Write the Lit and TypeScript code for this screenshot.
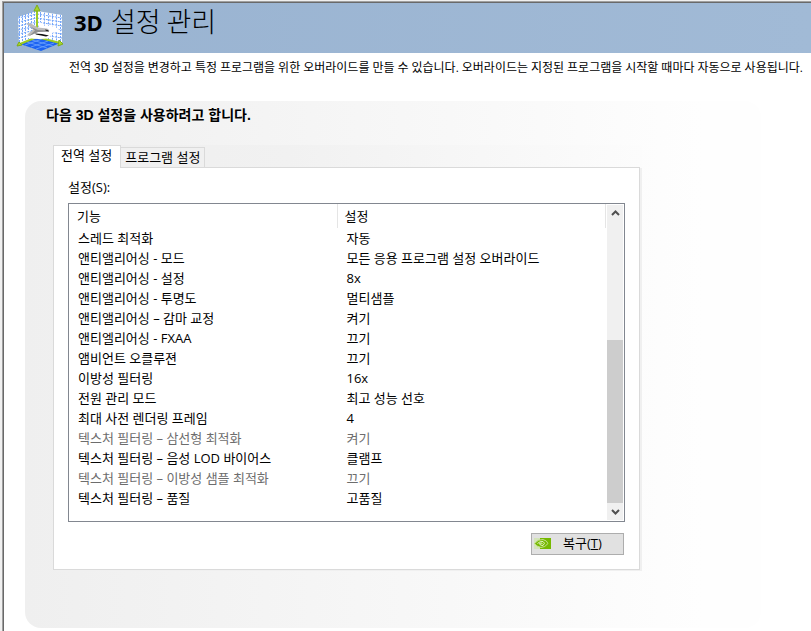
import { LitElement, html, css, svg } from "lit";
import { customElement, state } from "lit/decorators.js";
import { classMap } from "lit/directives/class-map.js";

interface Setting {
  name: string;
  value: string;
  disabled?: boolean;
}

const SETTINGS: Setting[] = [
  { name: "스레드 최적화", value: "자동" },
  { name: "앤티앨리어싱 - 모드", value: "모든 응용 프로그램 설정 오버라이드" },
  { name: "앤티앨리어싱 - 설정", value: "8x" },
  { name: "앤티앨리어싱 - 투명도", value: "멀티샘플" },
  { name: "앤티앨리어싱 – 감마 교정", value: "켜기" },
  { name: "앤티엘리어싱 - FXAA", value: "끄기" },
  { name: "앰비언트 오클루젼", value: "끄기" },
  { name: "이방성 필터링", value: "16x" },
  { name: "전원 관리 모드", value: "최고 성능 선호" },
  { name: "최대 사전 렌더링 프레임", value: "4" },
  { name: "텍스처 필터링 – 삼선형 최적화", value: "켜기", disabled: true },
  { name: "텍스처 필터링 – 음성 LOD 바이어스", value: "클램프" },
  { name: "텍스처 필터링 – 이방성 샘플 최적화", value: "끄기", disabled: true },
  { name: "텍스처 필터링 – 품질", value: "고품질" },
];

// Wall grid lines of the header emblem.
const steps = [0, 1, 2, 3, 4, 5];
const leftGrid = steps.map(
  (i) => svg`<path d="M${3.5 + i * 3} ${11 - i}V${38 - i}M2 ${13 + i * 4}L21 ${9 + i * 4}" />`
);
const rightGrid = steps.map(
  (i) => svg`<path d="M${24.5 + i * 4} ${7 + i * 0.6}V${32 + i}M21 ${9 + i * 4}L46 ${13 + i * 4}" />`
);

const emblem = html`
  <svg class="emblem" viewBox="0 0 48 48" aria-hidden="true">
    <path d="M2 12L21 6V32L3 39Z" fill="#fff" />
    <path d="M21 6L46 10V38L21 32Z" fill="#fff" />
    <g fill="none" stroke="#74a6fa" stroke-width="1" stroke-dasharray="2 1">
      ${leftGrid}${rightGrid}
    </g>
    <path d="M4 39L21 32L44 38L25 46Z" fill="#1c62f2" />
    <path d="M9 40L26 34M15 42L32 36M20 44L38 38M11 37L31 43M16 35L37 41" stroke="#6fa4fb" stroke-width="0.8" fill="none" />
    <path d="M21 5V32L4 39M21 32L44 38" fill="none" stroke="#9ccb23" stroke-width="2" />
    <path d="M21 0L24 6H18Z" fill="#a6d62a" stroke="#7fab1a" />
    <path d="M1 41L3 37L6 40Z" fill="#a6d62a" stroke="#7fab1a" />
    <path d="M43 35L47 39L42 41Z" fill="#a6d62a" stroke="#7fab1a" />
    <path d="M23 24L24 17L29 21Q40 19 46 28Q40 26 36 28L33 33Q24 35 12 33L10 28Z" fill="#fff" />
    <path d="M10 18L15 18.500L22 22.500L31 23.500Q34 25 33 26.500L22 27L13 31L11 30L17 24.500Z" fill="#bcbcbc" />
    <path d="M15 22L22 25L32 25.500L33 26.500L22 27L13 31L19 25.500Z" fill="#8e8e8e" />
    <path d="M19 28.500L26 29L33 30.500L30 31.500L20 29.500Z" fill="#111" />
    <path d="M29 24.500L32 25L33 26.500L30 26Z" fill="#222" />
  </svg>
`;

const eye = html`
  <svg class="eye" viewBox="0 0 17 11" aria-hidden="true">
    <path d="M0 0H6V11H0Z" fill="#d3e4b8" />
    <path d="M6 0H17V11H6Z" fill="#76b900" />
    <path d="M0.500 5.500Q4 1 9 1.500Q13 2.500 14 5.500Q11 9.500 7 9.500Q2.500 8.500 0.500 5.500Z" fill="#76b900" stroke="#c4e08f" />
    <path d="M3.500 5.500Q6 3 9 3.500Q12 5 9 7.500Q5.500 7.500 5.500 5.500Q7 4.500 8.500 5.500" fill="none" stroke="#e4f4c4" />
  </svg>
`;

@customElement("app-root")
export class AppRoot extends LitElement {
  @state() private tab = 0;

  static styles = css`
    :host {
      display: block;
      box-sizing: border-box;
      min-height: 100vh;
      padding: 1px 0 0 2px;
      background: #f0f0f0;
      color: #000;
      font: 13px/20px "Open Sans", "Noto Sans CJK KR", sans-serif;
    }
    *, *::before, *::after {
      box-sizing: border-box;
    }
    button {
      margin: 0;
      padding: 0;
      font: inherit;
      color: inherit;
      border-radius: 0;
    }
    .window {
      min-height: calc(100vh - 1px);
      background: #696969;
      border: solid #a0a0a0;
      border-width: 1px 0 0 1px;
      padding: 1px 0 0 1px;
      display: grid;
    }
    .page {
      background: #fff;
    }
    .banner {
      display: flex;
      align-items: flex-start;
      height: 50px;
      padding-left: 12px;
      gap: 10px;
      background: linear-gradient(90deg, #99b3d1, #a1bad6);
    }
    .emblem {
      width: 48px;
      height: 48px;
      margin-top: 2px;
      flex: none;
    }
    h1 {
      display: flex;
      gap: 8px;
      margin: 0;
      font: 300 27px/36px "Noto Sans CJK KR", sans-serif;
    }
    h1 b {
      font: 700 22px/38px "Open Sans", sans-serif;
    }
    .intro {
      margin: 0;
      padding: 5px 0 0 65px;
      font: 12px/20px Roboto, "Noto Sans CJK KR", sans-serif;
      white-space: nowrap;
    }
    .group {
      margin: 23px 50px 3px 21px;
      padding: 4px 121px 58px 28px;
      border-radius: 16px;
      background: linear-gradient(90deg, #efefef, #f1f1f1 14%, #fafafa 70%, #fefefe 92%);
    }
    h2 {
      margin: 0 0 20px -7px;
      font: 700 14px/20px "Liberation Sans", "Noto Sans CJK KR", sans-serif;
    }
    .tabs {
      display: flex;
      align-items: flex-end;
      height: 23px;
      margin: 0 -2px -1px 0;
      background: linear-gradient(90deg, #eee, #f1f1f1 40%, #fcfcfc);
    }
    .tab {
      height: 21px;
      padding: 0 4px 2px;
      line-height: 18px;
      border: 1px solid #dadada;
      background: #f0f0f0;
      border-left: 0;
      white-space: nowrap;
    }
    .tab.active {
      height: 23px;
      padding: 0 8px 4px 7px;
      border-left: 1px solid #dadada;
      border-bottom: 0;
      background: #fff;
    }
    .panel {
      padding: 9px 14px 14px 14px;
      border: 1px solid #dadada;
      background: #fff;
      box-shadow: 2px 1px 0 #f0f0f0;
    }
    .caption {
      display: block;
      margin-bottom: 6px;
    }
    .list {
      display: flex;
      border: 1px solid #828790;
      padding-bottom: 13px;
      background: #fff;
    }
    table {
      flex: 1;
      table-layout: fixed;
      border-collapse: separate;
      border-spacing: 0;
    }
    .col-name {
      width: 50%;
    }
    th, td {
      padding: 0 0 0 9px;
      height: 20px;
      font-weight: 400;
      text-align: left;
      white-space: nowrap;
    }
    th {
      height: 24px;
      padding-left: 8px;
      border-right: 1px solid #e5e5e5;
    }
    th + th {
      padding-left: 7px;
    }
    .disabled {
      color: #6d6d6d;
    }
    .scroll {
      display: flex;
      flex-direction: column;
      width: 16px;
      margin: 1px 1px -12px;
      background: #f0f0f0;
    }
    .step {
      display: grid;
      place-items: center;
      height: 17px;
      border: 0;
      background: none;
    }
    .step svg {
      width: 9px;
      height: 7px;
    }
    .track {
      flex: 1;
      display: flex;
      align-items: flex-end;
    }
    .thumb {
      width: 100%;
      height: 58%;
      background: #cdcdcd;
    }
    .actions {
      display: flex;
      justify-content: flex-end;
      margin: 11px 1px 0 0;
    }
    .restore {
      display: flex;
      align-items: center;
      gap: 12px;
      width: 93px;
      height: 22px;
      padding: 0 2px 2px;
      border: 1px solid #adadad;
      background: #e1e1e1;
      line-height: 18px;
    }
    .eye {
      width: 17px;
      height: 11px;
    }
  `;

  private renderTab(label: string, index: number) {
    const active = this.tab === index;
    return html`<button
      class=${classMap({ tab: true, active })}
      role="tab"
      aria-selected=${active}
      @click=${() => (this.tab = index)}
    >${label}</button>`;
  }

  render() {
    return html`
      <div class="window">
        <main class="page">
          <header class="banner">
            ${emblem}
            <h1><b>3D</b><span>설정 관리</span></h1>
          </header>
          <p class="intro">전역 3D 설정을 변경하고 특정 프로그램을 위한 오버라이드를 만들 수 있습니다. 오버라이드는 지정된 프로그램을 시작할 때마다 자동으로 사용됩니다.</p>
          <section class="group">
            <h2>다음 3D 설정을 사용하려고 합니다.</h2>
            <div class="tabs" role="tablist">
              ${this.renderTab("전역 설정", 0)}${this.renderTab("프로그램 설정", 1)}
            </div>
            <div class="panel" role="tabpanel">
              <span class="caption" id="caption">설정(S):</span>
              <div class="list">
                <table aria-labelledby="caption">
                  <colgroup><col class="col-name" /><col /></colgroup>
                  <thead>
                    <tr><th scope="col">기능</th><th scope="col">설정</th></tr>
                  </thead>
                  <tbody>
                    ${SETTINGS.map(
                      (s) => html`<tr class=${classMap({ disabled: !!s.disabled })}>
                        <td>${s.name}</td><td>${s.value}</td>
                      </tr>`
                    )}
                  </tbody>
                </table>
                <div class="scroll">
                  <button class="step" aria-label="위로">
                    <svg viewBox="0 0 9 7"><path d="M1 5L4.500 1.500L8 5" fill="none" stroke="#505050" stroke-width="2" /></svg>
                  </button>
                  <div class="track"><div class="thumb"></div></div>
                  <button class="step" aria-label="아래로">
                    <svg viewBox="0 0 9 7"><path d="M1 2L4.500 5.500L8 2" fill="none" stroke="#505050" stroke-width="2" /></svg>
                  </button>
                </div>
              </div>
              <div class="actions">
                <button class="restore">${eye}<span>복구(<u>T</u>)</span></button>
              </div>
            </div>
          </section>
        </main>
      </div>
    `;
  }
}
